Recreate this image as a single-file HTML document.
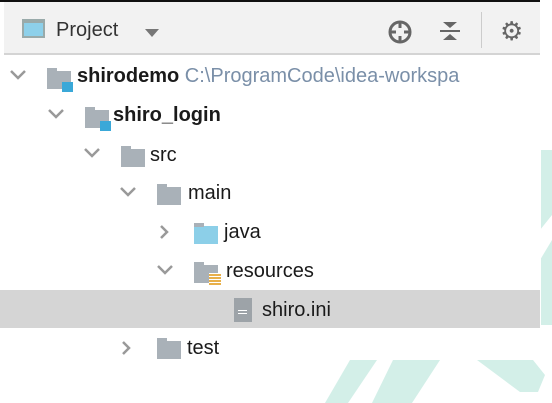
<!DOCTYPE html>
<html><head><meta charset="utf-8"><style>
body{margin:0;width:552px;height:403px;overflow:hidden;background:#fff;font-family:"Liberation Sans","Noto Sans CJK SC",sans-serif;position:relative}
.top{position:absolute;left:0;top:0;width:540px;height:2px;background:#111}
.hdr{position:absolute;left:4px;top:2px;width:536px;height:51px;background:#f2f2f2;border-bottom:2px solid #d4d4d4}
.t{position:absolute;font-size:20px;color:#1a1a1a;line-height:24px;white-space:nowrap}
.b{font-weight:bold}
.fold{position:absolute;width:24px;height:18px;background:#a9b1b8}
.fold:before{content:"";position:absolute;left:0;top:-3px;width:10px;height:4px;background:#a9b1b8}
</style></head><body>
<svg style="position:absolute;left:0;top:0" width="552" height="403"><g fill="#d3efe8">
<polygon points="350,360 377,360 348,403 325,403"/>
<polygon points="393,360 440,360 412,403 372,403"/>
<polygon points="477,360 533,360 545,375 538,392 520,392"/>
<rect x="541" y="150" width="11" height="175"/>
</g><polygon points="540,230 552,215 552,240 540,260" fill="#fff"/></svg>
<div class="top"></div>
<div class="hdr">
<div style="position:absolute;left:18px;top:17px;width:23px;height:19px;border:2px solid #9aa;background:#8dd0ea;box-sizing:border-box;border-top-width:4px"></div>
<div class="t" style="left:52px;top:16px;color:#333">Project</div>
<div style="position:absolute;left:141px;top:27px;border-left:7px solid transparent;border-right:7px solid transparent;border-top:8px solid #777"></div>
<svg style="position:absolute;left:383px;top:17px" width="26" height="26" viewBox="0 0 26 26"><circle cx="13" cy="13" r="10" fill="none" stroke="#666" stroke-width="3"/><path d="M13 2v7M13 17v7M2 13h7M17 13h7" stroke="#666" stroke-width="3"/></svg>
<svg style="position:absolute;left:434px;top:16px" width="24" height="26" viewBox="0 0 24 26"><path d="M5 4h14l-7 6z M5 22h14l-7-6z" fill="#666"/><rect x="2" y="12" width="20" height="2" fill="#666"/></svg>
<div style="position:absolute;left:477px;top:10px;width:1px;height:36px;background:#ccc"></div>
<div style="position:absolute;left:496px;top:17px;font-size:26px;color:#666;line-height:24px">⚙</div>
</div>
<svg style="position:absolute;left:0;top:0" width="552" height="403"><g fill="none" stroke="#999" stroke-width="2.5">
<path d="M11 71l7 7 7-7"/><path d="M49 110l7 7 7-7"/><path d="M85 149l7 7 7-7"/><path d="M121 188l7 7 7-7"/><path d="M158 266l7 7 7-7"/>
<path d="M161 226l6 6-6 6"/><path d="M123 342l6 6-6 6"/></g></svg>
<div class="fold" style="left:47px;top:71px"></div><div style="position:absolute;left:62px;top:82px;width:11px;height:10px;background:#3aa8d8"></div>
<div class="t b" style="left:77px;top:64px">shirodemo <span style="font-weight:normal;color:#7a8fa8">C:\ProgramCode\idea-workspa</span></div>
<div class="fold" style="left:85px;top:110px"></div><div style="position:absolute;left:100px;top:121px;width:11px;height:10px;background:#3aa8d8"></div>
<div class="t b" style="left:113px;top:103px">shiro_login</div>
<div class="fold" style="left:121px;top:149px"></div>
<div class="t" style="left:150px;top:143px">src</div>
<div class="fold" style="left:157px;top:187px"></div>
<div class="t" style="left:188px;top:181px">main</div>
<div class="fold" style="left:194px;top:226px;background:#8ccfe8"></div>
<div class="t" style="left:224px;top:220px">java</div>
<div class="fold" style="left:194px;top:265px"></div>
<div style="position:absolute;left:209px;top:273px;width:12px;height:13px;background:repeating-linear-gradient(#fff 0 1px,#e8b04a 1px 3px)"></div>
<div class="t" style="left:226px;top:259px">resources</div>
<div style="position:absolute;left:0;top:290px;width:540px;height:38px;background:#d5d5d5"></div>
<div style="position:absolute;left:234px;top:298px;width:18px;height:24px;background:#9da3a8"></div>
<div style="position:absolute;left:238px;top:309px;width:9px;height:7px;background:repeating-linear-gradient(#9da3a8 0 1px,#fff 1px 2px,#9da3a8 2px 3px)"></div>
<div class="t" style="left:262px;top:298px">shiro.ini</div>
<div class="fold" style="left:157px;top:341px"></div>
<div class="t" style="left:187px;top:336px">test</div>
</body></html>
